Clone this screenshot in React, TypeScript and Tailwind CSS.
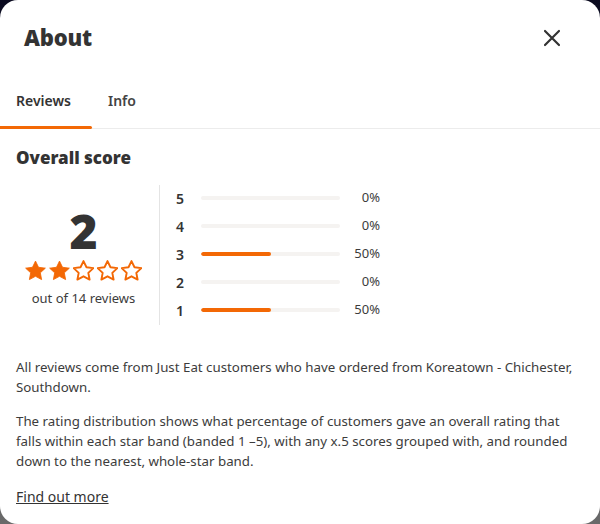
import React from "react";

const Star = ({ filled }: { filled: boolean }) => (
  <svg width="21" height="21" viewBox="2.2 2.2 19.6 19.6" className="shrink-0">
    <path
      d="M12 3.2l2.8 5.8 6.4.8-4.7 4.4 1.2 6.3L12 17.4l-5.7 3.1 1.2-6.3-4.7-4.4 6.4-.8z"
      fill={filled ? "#f36805" : "none"}
      stroke="#f36805"
      strokeWidth={filled ? 0.8 : 1.8}
      strokeLinejoin="round"
    />
  </svg>
);

const rows = [
  { n: 5, p: 0 },
  { n: 4, p: 0 },
  { n: 3, p: 50 },
  { n: 2, p: 0 },
  { n: 1, p: 50 },
];

export default function App() {
  return (
    <div className="w-[600px] h-[524px] bg-gradient-to-b from-[#0b0b20] to-[#6a6a6a]">
      <div
        className="w-full h-full bg-white rounded-[18px] text-[#3c3c3c] overflow-hidden"
        style={{ fontFamily: '"Noto Sans", sans-serif' }}
      >
        <div className="flex items-center justify-between pl-6 pr-[39px] pt-[4px] h-[70px]">
          <h1 className="text-[22px] font-black tracking-[-0.2px] text-[#333]">About</h1>
          <svg width="18" height="18" viewBox="0 0 18 18" className="mt-[2px]">
            <path d="M2 2L16 16M16 2L2 16" stroke="#333" strokeWidth="2.2" strokeLinecap="round" />
          </svg>
        </div>
        <div className="flex border-b border-[#ececec] h-[59px] items-end">
          <div className="relative w-[92px] h-full flex items-center pl-4 pt-[3px]">
            <span className="text-[14px] font-semibold text-[#333]">Reviews</span>
            <div className="absolute left-0 right-0 bottom-[-1px] h-[3px] bg-[#f36805] rounded-r-sm" />
          </div>
          <div className="h-full flex items-center pl-4 pt-[3px]">
            <span className="text-[14px] font-semibold text-[#444]">Info</span>
          </div>
        </div>
        <div className="px-4">
          <h2 className="text-[17px] font-black text-[#333] mt-[17px] leading-[24px]">Overall score</h2>
          <div className="flex mt-[15px]">
            <div className="w-[144px] flex flex-col items-center pt-[18px] pr-[8px] border-r border-[#e4e4e4] h-[140px]">
              <div className="text-[48px] font-black leading-[56px] text-[#333]">2</div>
              <div className="flex gap-[3px] mt-[1px]">
                <Star filled />
                <Star filled />
                <Star filled={false} />
                <Star filled={false} />
                <Star filled={false} />
              </div>
              <div className="text-[13px] mt-[8px] text-[#3c3c3c]">out of 14 reviews</div>
            </div>
            <div className="flex flex-col pl-[16px] -mt-[1px]">
              {rows.map((r) => (
                <div key={r.n} className="flex items-center h-[28px]">
                  <span className="w-[25px] text-[14px] font-semibold text-[#333]">{r.n}</span>
                  <div className="w-[139px] h-[4px] bg-[#f5f3f1] rounded-full overflow-hidden">
                    <div className="h-full bg-[#f36805] rounded-full" style={{ width: `${r.p}%` }} />
                  </div>
                  <span className="w-[40px] text-right text-[13px] text-[#3c3c3c]">{r.p}%</span>
                </div>
              ))}
            </div>
          </div>
          <p className="text-[13.3px] leading-[20px] mt-[32px] text-[#3c3c3c]">
            All reviews come from Just Eat customers who have ordered from Koreatown - Chichester, Southdown.
          </p>
          <p className="text-[13.3px] leading-[20px] mt-[14px] text-[#3c3c3c] pr-[10px]">
            The rating distribution shows what percentage of customers gave an overall rating that falls within each star band (banded 1 –5), with any x.5 scores grouped with, and rounded down to the nearest, whole-star band.
          </p>
          <a className="block mt-[16px] text-[14px] underline text-[#333] leading-[20px]">Find out more</a>
        </div>
      </div>
    </div>
  );
}
